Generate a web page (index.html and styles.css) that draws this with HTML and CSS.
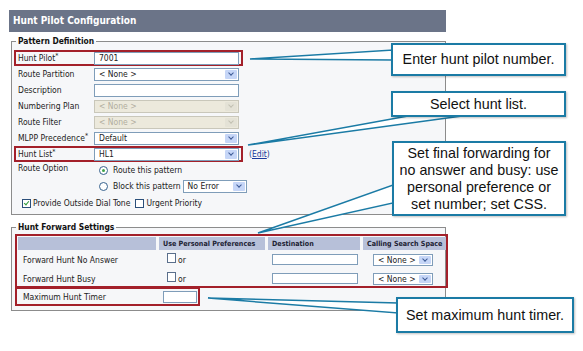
FILE: index.html
```html
<!DOCTYPE html>
<html lang="en">
<head>
  <meta charset="UTF-8">
  <title>Hunt Pilot Configuration</title>
  <link rel="stylesheet" href="styles.css">
</head>
<body>
<div class="page">
  <div class="panel">
    <div class="titlebar">Hunt Pilot Configuration</div>

    <fieldset class="group">
      <legend>Pattern Definition</legend>
      <div class="row mark">
        <span class="lbl">Hunt Pilot<sup>*</sup></span>
        <span class="field text wide">7001</span>
      </div>
      <div class="row">
        <span class="lbl">Route Partition</span>
        <span class="field select wide">&lt; None &gt;</span>
      </div>
      <div class="row">
        <span class="lbl">Description</span>
        <span class="field text wide"></span>
      </div>
      <div class="row">
        <span class="lbl">Numbering Plan</span>
        <span class="field select wide off">&lt; None &gt;</span>
      </div>
      <div class="row">
        <span class="lbl">Route Filter</span>
        <span class="field select wide off">&lt; None &gt;</span>
      </div>
      <div class="row">
        <span class="lbl">MLPP Precedence<sup>*</sup></span>
        <span class="field select wide">Default</span>
      </div>
      <div class="row-wrap">
        <div class="row mark">
          <span class="lbl">Hunt List<sup>*</sup></span>
          <span class="field select wide">HL1</span>
        </div>
        <span class="edit">(<a href="#">Edit</a>)</span>
      </div>
      <div class="row">
        <span class="lbl lbl-top">Route Option</span>
        <span class="opt"><span class="radio on"></span>Route this pattern</span>
      </div>
      <div class="row">
        <span class="lbl"></span>
        <span class="opt"><span class="radio"></span>Block this pattern</span>
        <span class="field select err">No Error</span>
      </div>
      <div class="row checks">
        <span class="box on first"></span>Provide Outside Dial Tone
        <span class="box gap"></span>Urgent Priority
      </div>
    </fieldset>

    <fieldset class="group second">
      <legend>Hunt Forward Settings</legend>
      <div class="fwd">
        <div class="fwd-grid">
          <span class="th"></span>
          <span class="th">Use Personal Preferences</span>
          <span class="th">Destination</span>
          <span class="th">Calling Search Space</span>

          <span class="td name">Forward Hunt No Answer</span>
          <span class="td"><span class="box small"></span>or</span>
          <span class="td"><span class="field text dest"></span></span>
          <span class="td mid"><span class="field select css">&lt; None &gt;</span></span>

          <span class="td name">Forward Hunt Busy</span>
          <span class="td"><span class="box small"></span>or</span>
          <span class="td"><span class="field text dest"></span></span>
          <span class="td mid"><span class="field select css">&lt; None &gt;</span></span>
        </div>
      </div>
      <div class="timer">
        <span class="name">Maximum Hunt Timer</span>
        <span class="field text short"></span>
      </div>
    </fieldset>
  </div>

  <svg class="tails" width="583" height="351" viewBox="0 0 583 351">
    <polygon points="250,59 393,50 393,60"/>
    <polygon points="248,145 408,116 462,116"/>
    <polygon points="258,233 393,185 393,203"/>
    <polygon points="208,298 398,303 398,313"/>
  </svg>

  <div class="callout c1">Enter hunt pilot number.</div>
  <div class="callout c2">Select hunt list.</div>
  <div class="callout c3">Set final forwarding for<br>no answer and busy: use<br>personal preference or<br>set number; set CSS.</div>
  <div class="callout c4">Set maximum hunt timer.</div>
</div>
</body>
</html>
```

FILE: styles.css
```css
body {
  margin: 0;
  background: #fff;
  font-family: "DejaVu Sans Condensed", "DejaVu Sans", sans-serif;
  font-size: 8.5px;
  color: #222;
}

.page {
  position: relative;
  width: 583px;
  height: 351px;
  overflow: hidden;
}

.panel {
  width: 437px;
  margin: 10px 0 0 9px;
}

.titlebar {
  height: 22px;
  line-height: 22px;
  background: #6b7488;
  color: #fff;
  font-weight: bold;
  font-size: 10px;
  padding-left: 4px;
}

.group {
  margin: 3px 0 0 2px;
  width: 435px;
  min-width: 0;
  box-sizing: border-box;
  padding: 3px 0 2px;
  border: 1px solid #8c8c8c;
  background: #f6f7f9;
}

.group legend {
  font-weight: bold;
  font-size: 8.4px;
  line-height: 12px;
  padding: 0 2px;
  margin-left: 4px;
  color: #111;
}

.second {
  margin-top: 6px;
  padding: 1px 0 4px;
}

/* pattern rows */
.row {
  display: flex;
  align-items: center;
  height: 16px;
  width: 229px;
  box-sizing: border-box;
  margin-left: 2px;
  padding: 0 4px;
}

.row.mark {
  border: 2px solid #a3202a;
  padding: 0 2px;
}

.row-wrap {
  display: flex;
  align-items: center;
}

.lbl {
  width: 76px;
  flex: none;
  white-space: nowrap;
}

.lbl-top {
  align-self: flex-start;
  padding-top: 1px;
}

sup {
  font-size: 7px;
  line-height: 0;
  vertical-align: 3px;
}

.edit {
  margin-left: 6px;
  color: #1a3a8c;
}

.edit a {
  color: #1a3a9c;
}

.field {
  position: relative;
  display: flex;
  align-items: center;
  box-sizing: border-box;
  height: 13px;
  padding-left: 4px;
  border: 1px solid #7f9db9;
  background: #fff;
  white-space: nowrap;
}

.wide {
  width: 147px;
}

.select::after {
  content: "";
  position: absolute;
  top: 1px;
  right: 1px;
  bottom: 1px;
  width: 12px;
  background: #c6d6f7;
  border-radius: 1px;
}

.select::before {
  content: "";
  position: absolute;
  z-index: 1;
  top: 2px;
  right: 5px;
  width: 3px;
  height: 3px;
  border-right: 1.5px solid #3c5a96;
  border-bottom: 1.5px solid #3c5a96;
  transform: rotate(45deg);
}

.off {
  background: #ece9dc;
  color: #b2ae9f;
  border-color: #c9c7ba;
}

.off::after {
  background: #e4e2d6;
}

.off::before {
  border-color: #c2c0b2;
}

.opt {
  display: flex;
  align-items: center;
  margin-left: 5px;
  white-space: nowrap;
}

.radio {
  width: 7px;
  height: 7px;
  margin-right: 5px;
  border: 1px solid #37628f;
  border-radius: 50%;
  background: #fff;
  display: flex;
  align-items: center;
  justify-content: center;
}

.radio.on::after {
  content: "";
  width: 3px;
  height: 3px;
  border-radius: 50%;
  background: #3fa34a;
}

.err {
  width: 64px;
  margin-left: 2px;
  flex: none;
}

.checks {
  height: 18px;
  width: auto;
  white-space: nowrap;
}

.box {
  position: relative;
  width: 7px;
  height: 7px;
  flex: none;
  margin: 0 2px 0 0;
  border: 1px solid #2b4f7a;
  background: #fff;
}

.box.first {
  margin-left: 4px;
}

.box.gap {
  margin-left: 5px;
}

.box.on::after {
  content: "";
  position: absolute;
  left: 2px;
  top: 0;
  width: 2px;
  height: 4px;
  border-right: 1.5px solid #2f9a3a;
  border-bottom: 1.5px solid #2f9a3a;
  transform: rotate(40deg);
}

/* forward settings */
.fwd {
  width: 433px;
  height: 54px;
  box-sizing: border-box;
  margin-left: 3px;
  margin-right: -1px;
  padding-top: 1px;
  border: 2px solid #a3202a;
}

.fwd-grid {
  display: grid;
  grid-template-columns: 138px 106px 92px 83px;
  grid-template-rows: 13px 19px 19px;
  column-gap: 3px;
  margin-left: 1px;
}

.th {
  background: #b7c0d9;
  font-weight: bold;
  font-size: 7.1px;
  line-height: 13px;
  padding-left: 4px;
  white-space: nowrap;
  overflow: hidden;
  color: #1c2233;
}

.td {
  display: flex;
  align-items: center;
  padding-left: 8px;
}

.td.name {
  padding-left: 5px;
}

.td.mid {
  justify-content: center;
  padding-left: 0;
}

.box.small {
  width: 7px;
  height: 8px;
  margin-top: -3px;
  border-color: #5a6f8c;
}

.dest {
  width: 86px;
  height: 11px;
  margin-left: -4px;
}

.css {
  width: 60px;
  height: 12px;
  margin-left: -3px;
}

.timer {
  display: flex;
  align-items: center;
  width: 185px;
  height: 18px;
  box-sizing: border-box;
  margin-left: 3px;
  padding-left: 6px;
  border: 2px solid #a3202a;
  border-top-width: 1px;
}

.timer .name {
  width: 140px;
}

.short {
  width: 34px;
  height: 12px;
}

/* callouts */
.tails {
  position: absolute;
  left: 0;
  top: 0;
}

.tails polygon {
  fill: #fff;
  stroke: #1b7ba5;
  stroke-width: 1.5;
}

.callout {
  position: absolute;
  box-sizing: border-box;
  display: flex;
  align-items: center;
  justify-content: center;
  text-align: center;
  background: #fff;
  border: 2px solid #1b7ba5;
  box-shadow: 1px 1px 2px rgba(0, 0, 0, 0.25);
  font-family: "Liberation Sans", Arial, sans-serif;
  font-size: 14.3px;
  line-height: 17px;
  color: #111;
}

.c1 {
  left: 391px;
  top: 43px;
  width: 175px;
  height: 33px;
}

.c2 {
  left: 391px;
  top: 91px;
  width: 175px;
  height: 26px;
}

.c3 {
  left: 392px;
  top: 141px;
  width: 174px;
  height: 75px;
}

.c4 {
  left: 396px;
  top: 297px;
  width: 178px;
  height: 36px;
}
```
